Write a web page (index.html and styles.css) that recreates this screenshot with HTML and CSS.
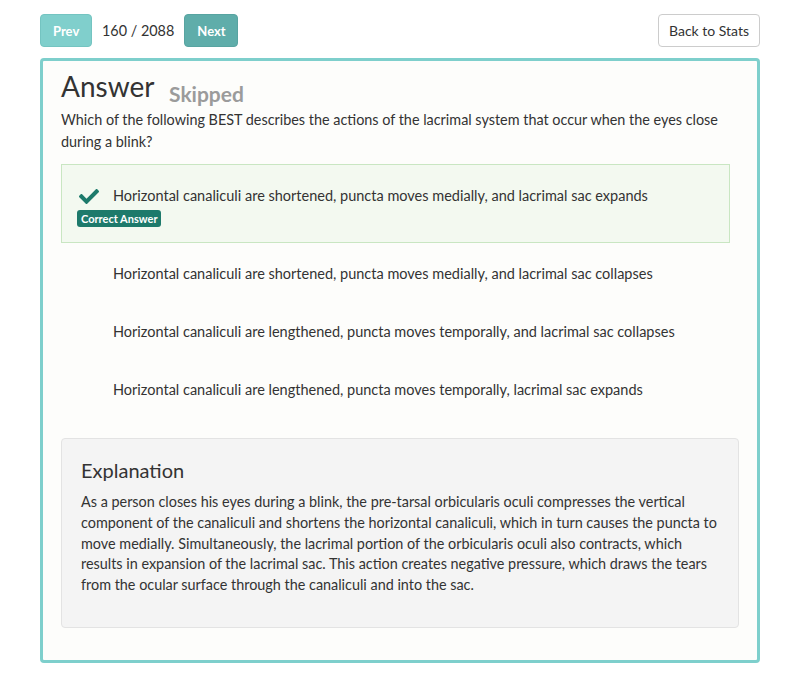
FILE: index.html
```html
<!DOCTYPE html>
<html lang="en">
<head>
<meta charset="utf-8">
<title>Answer</title>
<link rel="stylesheet" href="styles.css">
</head>
<body>
<div class="page">
  <div class="topbar">
    <div class="nav">
      <button class="btn btn-prev">Prev</button>
      <span class="counter">160 / 2088</span>
      <button class="btn btn-next">Next</button>
    </div>
    <button class="btn-back">Back to Stats</button>
  </div>

  <div class="card">
    <h1 class="title">Answer <span class="status">Skipped</span></h1>
    <p class="question">Which of the following BEST describes the actions of the lacrimal system that occur when the eyes close during a blink?</p>

    <div class="options">
      <div class="option correct">
        <span class="icon">
          <svg width="20" height="15" viewBox="0 64 512 384" preserveAspectRatio="none"><path fill="#1d7a6b" d="M173.898 439.404l-166.4-166.4c-9.997-9.997-9.997-26.206 0-36.204l36.203-36.204c9.997-9.998 26.207-9.998 36.204 0L192 312.69 432.095 72.596c9.997-9.997 26.207-9.997 36.204 0l36.203 36.204c9.997 9.997 9.997 26.206 0 36.204l-294.4 294.401c-9.998 9.997-26.207 9.997-36.204-.001z"/></svg>
        </span>
        <span class="text">Horizontal canaliculi are shortened, puncta moves medially, and lacrimal sac expands</span>
        <span class="badge">Correct Answer</span>
      </div>
      <div class="option">
        <span class="icon"></span>
        <span class="text">Horizontal canaliculi are shortened, puncta moves medially, and lacrimal sac collapses</span>
      </div>
      <div class="option">
        <span class="icon"></span>
        <span class="text">Horizontal canaliculi are lengthened, puncta moves temporally, and lacrimal sac collapses</span>
      </div>
      <div class="option">
        <span class="icon"></span>
        <span class="text">Horizontal canaliculi are lengthened, puncta moves temporally, lacrimal sac expands</span>
      </div>
    </div>

    <div class="explanation">
      <h2 class="exp-title">Explanation</h2>
      <p class="exp-text">As a person closes his eyes during a blink, the pre-tarsal orbicularis oculi compresses the vertical component of the canaliculi and shortens the horizontal canaliculi, which in turn causes the puncta to move medially. Simultaneously, the lacrimal portion of the orbicularis oculi also contracts, which results in expansion of the lacrimal sac. This action creates negative pressure, which draws the tears from the ocular surface through the canaliculi and into the sac.</p>
    </div>
  </div>
</div>
</body>
</html>
```

FILE: styles.css
```css
* { box-sizing: border-box; }

body {
  margin: 0;
  background: #ffffff;
  font-family: Lato, "Open Sans", "Liberation Sans", sans-serif;
  color: #333333;
}

.page {
  padding: 14px 40px 0 40px;
}

.topbar {
  display: flex;
  justify-content: space-between;
  align-items: center;
  height: 33px;
}

.nav {
  display: flex;
  align-items: center;
  gap: 10px;
}

.btn {
  height: 33px;
  border: 1px solid transparent;
  border-radius: 4px;
  color: #ffffff;
  font-family: inherit;
  font-weight: 700;
  font-size: 13px;
  padding: 0 12px;
  cursor: pointer;
}

.btn-prev {
  width: 52px;
  background: #80cfcc;
  border-color: #74c4c1;
}

.btn-next {
  width: 54px;
  background: #5fadaa;
  border-color: #58a4a1;
}

.counter {
  font-size: 14.4px;
  color: #333333;
}

.btn-back {
  height: 33px;
  width: 102px;
  background: #ffffff;
  border: 1px solid #cccccc;
  border-radius: 4px;
  font-family: inherit;
  font-size: 14px;
  color: #333333;
  padding: 0;
}

.card {
  margin-top: 11px;
  border: 3px solid #7ecfcc;
  border-radius: 4px;
  background: #fdfdfb;
  padding: 8px 18px 32px 18px;
}

.title {
  margin: 0;
  font-size: 28px;
  font-weight: 400;
  line-height: 34px;
  color: #333333;
}

.status {
  font-size: 21px;
  font-weight: 700;
  color: #9b9b9b;
  margin-left: 8px;
  line-height: 0;
  vertical-align: -5px;
}

.question {
  margin: 6px 0 11px 0;
  font-size: 14.4px;
  line-height: 22px;
}

.options {
  margin-right: 9px;
}

.option {
  display: grid;
  grid-template-columns: 36px 1fr;
  align-items: center;
  border: 1px solid transparent;
  padding: 17px 15px 17px 15px;
  font-size: 14.5px;
  line-height: 22px;
}

.option.correct {
  background: #f3f9f0;
  border-color: #c9e6c2;
  padding: 20px 15px 15px 15px;
}

.option.correct + .option {
  margin-top: 2px;
}

.icon {
  display: flex;
  align-items: center;
  padding-left: 2px;
}

.badge {
  grid-column: 1 / 3;
  justify-self: start;
  margin-top: 3px;
  background: #1d7a6b;
  color: #ffffff;
  font-weight: 700;
  font-size: 11px;
  line-height: 17px;
  padding: 0 4px;
  border-radius: 3px;
}

.explanation {
  margin-top: 19px;
  background: #f4f4f4;
  border: 1px solid #e3e3e3;
  border-radius: 4px;
  padding: 19px 20px 31px 19px;
}

.exp-title {
  margin: 0 0 10px 0;
  font-size: 20px;
  font-weight: 400;
  line-height: 24px;
  color: #333333;
}

.exp-text {
  margin: 0;
  font-size: 14.4px;
  line-height: 20.8px;
}
```
